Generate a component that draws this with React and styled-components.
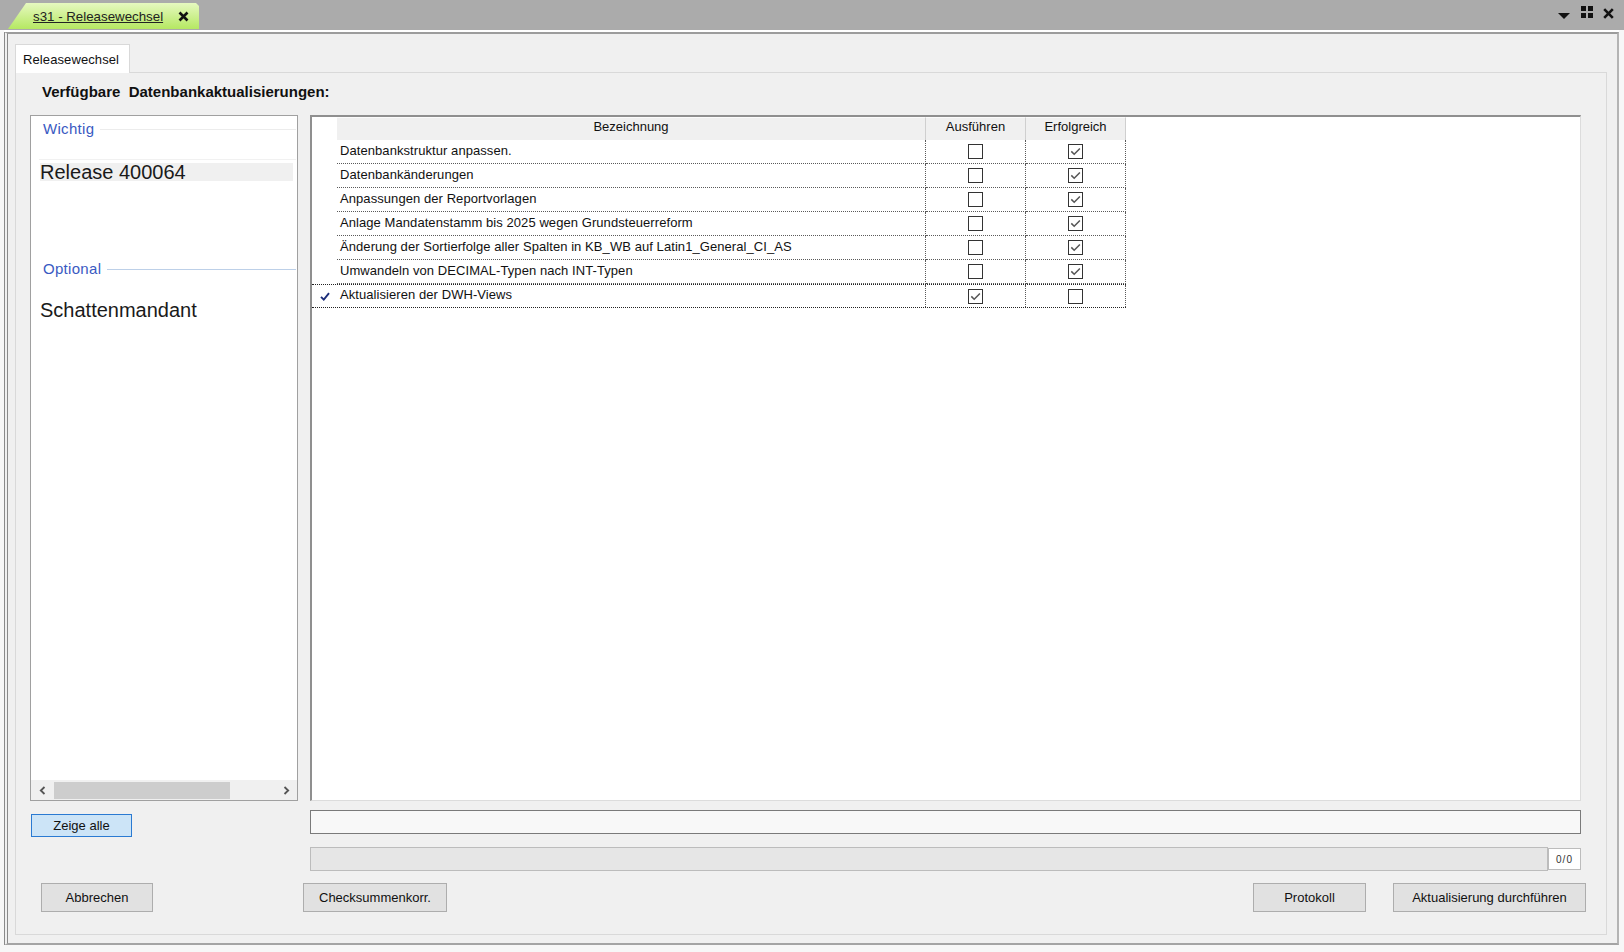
import React from "react";
import styled, { createGlobalStyle } from "styled-components";

const GlobalStyle = createGlobalStyle`
  html, body { margin: 0; padding: 0; }
  body { font-family: "Liberation Sans", Arial, sans-serif; color: #000; }
  * { box-sizing: border-box; }
`;

const FONT = `"Liberation Sans", Arial, sans-serif`;

const Root = styled.div`
  width: 1624px;
  height: 952px;
  display: flex;
  flex-direction: column;
  background: #f7f7f7;
  overflow: hidden;
  font-family: ${FONT};
`;

const TitleBar = styled.div`
  height: 30px;
  flex: none;
  background: #ababab;
  display: flex;
  align-items: flex-end;
  padding: 0 10px 1px 8px;
`;

const DocTab = styled.div`
  width: 191px;
  height: 26px;
  display: flex;
  align-items: center;
  padding-left: 25px;
  gap: 15px;
  background: linear-gradient(#e6f8c0, #b5e862);
  clip-path: polygon(0 100%, 18px 0, calc(100% - 3px) 0, 100% 3px, 100% 100%);
`;

const DocTabLabel = styled.span`
  font-size: 13.3px;
  color: #222;
  text-decoration: underline;
  white-space: nowrap;
`;

const CloseGlyph = styled.svg`
  width: 11px;
  height: 11px;
  flex: none;
`;

const TitleIcons = styled.div`
  margin-left: auto;
  align-self: flex-start;
  margin-top: 6px;
  display: flex;
  align-items: flex-start;
`;

const DropTriangle = styled.div`
  width: 0;
  height: 0;
  margin-top: 7px;
  border-left: 6px solid transparent;
  border-right: 6px solid transparent;
  border-top: 6px solid #111;
`;

const IconSvg = styled.svg`
  margin-left: ${(p) => p.$ml || 0}px;
  margin-top: ${(p) => p.$mt || 0}px;
  flex: none;
`;

const Frame = styled.div`
  flex: none;
  height: 913px;
  margin: 2px 5px 7px 4px;
  border-left: 4px double #8a8a8a;
  border-top: 2px solid #9c9c9c;
  border-right: 2px solid #b4b4b4;
  border-bottom: 2px solid #a4a4a4;
  box-shadow: 0 -2px 0 #fff;
  background: #f0f0f0;
  display: flex;
  flex-direction: column;
  padding: 10px 10px 8px 7px;
`;

const TabStrip = styled.div`
  display: flex;
  height: 28px;
  flex: none;
`;

const TabHeader = styled.div`
  width: 115px;
  height: 29px;
  background: #fff;
  border: 1px solid #d9d9d9;
  border-bottom: none;
  display: flex;
  align-items: center;
  padding-left: 7px;
  font-size: 13px;
  letter-spacing: 0.1px;
  color: #111;
  position: relative;
  z-index: 1;
`;

const TabPage = styled.div`
  flex: 1;
  border: 1px solid #d9d9d9;
  background: #f0f0f0;
  display: flex;
  flex-direction: column;
  padding: 10px 25px 22px 14px;
`;

const Heading = styled.div`
  height: 18px;
  line-height: 18px;
  font-size: 15px;
  font-weight: bold;
  padding-left: 12px;
  white-space: pre;
  color: #111;
`;

const MainRow = styled.div`
  margin-top: 14px;
  height: 686px;
  flex: none;
  display: flex;
  gap: 12px;
`;

/* ---------- left list view ---------- */
const ListPanel = styled.div`
  width: 268px;
  flex: none;
  background: #fff;
  border: 1px solid #a0a0a0;
  display: flex;
  flex-direction: column;
`;

const GroupHeader = styled.div`
  display: flex;
  align-items: center;
  gap: 6px;
  height: 16px;
  margin-top: ${(p) => p.$mt}px;
  padding: 0 1px 0 12px;
`;

const GroupTitle = styled.span`
  font-size: 15px;
  line-height: 16px;
  letter-spacing: 0.3px;
  color: #3a5ac2;
`;

const GroupLine = styled.div`
  flex: 1;
  height: 1px;
  background: ${(p) => p.$color};
`;

const ListSeparator = styled.div`
  height: 1px;
  margin: 22px 1px 0 8px;
  background: #f1f1f1;
`;

const ListItem = styled.div`
  height: 18px;
  line-height: 18px;
  margin: ${(p) => p.$mt}px 4px 0 9px;
  font-size: 20px;
  color: #1a1a1a;
  background: ${(p) => (p.$highlight ? "#f0f0f0" : "transparent")};
  white-space: nowrap;
`;

const HScroll = styled.div`
  margin-top: auto;
  height: 20px;
  background: #f0f0f0;
  display: flex;
  align-items: center;
`;

const ScrollArrow = styled.div`
  width: 22px;
  height: 20px;
  flex: none;
  display: flex;
  align-items: center;
  justify-content: center;
`;

const ScrollTrack = styled.div`
  flex: 1;
  height: 20px;
  display: flex;
  align-items: center;
  padding-left: 1px;
`;

const ScrollThumb = styled.div`
  width: 176px;
  height: 17px;
  background: #cdcdcd;
`;

/* ---------- data grid ---------- */
const COLS = "25px 589px 100px 100px";

const GridPanel = styled.div`
  flex: 1;
  background: #fff;
  border-top: 2px solid #8f8f8f;
  border-left: 2px solid #8f8f8f;
  border-right: 1px solid #dcdcdc;
  border-bottom: 1px solid #dcdcdc;
`;

const GridHeaderRow = styled.div`
  display: grid;
  grid-template-columns: ${COLS};
  width: 814px;
  height: 23px;
`;

const HeaderCell = styled.div`
  background: ${(p) => (p.$corner ? "#fff" : "#f0f0f0")};
  border-top: 1px solid ${(p) => (p.$corner ? "#fff" : "#fbfbfb")};
  border-right: 1px solid ${(p) => (p.$corner ? "#fff" : "#cfcfcf")};
  font-size: 13px;
  line-height: 17px;
  text-align: center;
  color: #111;
  white-space: nowrap;
`;

const GridRow = styled.div`
  display: grid;
  grid-template-columns: ${COLS};
  width: 814px;
  height: 24px;
  border-top: ${(p) => (p.$selected ? "1px dotted #222" : "none")};
  border-bottom: ${(p) => (p.$selected ? "1px dotted #222" : "none")};
`;

const RowHeaderCell = styled.div`
  display: flex;
  align-items: center;
  justify-content: flex-end;
  padding-right: 7px;
`;

const DataCell = styled.div`
  border-right: 1px dotted #5a5a5a;
  border-bottom: ${(p) => (p.$selected ? "none" : "1px dotted #5a5a5a")};
  font-size: 13px;
  letter-spacing: 0.07px;
  line-height: ${(p) => (p.$selected ? 20 : 21)}px;
  padding-left: 3px;
  color: #111;
  white-space: nowrap;
  overflow: hidden;
  display: ${(p) => (p.$center ? "flex" : "block")};
  align-items: center;
  justify-content: center;
  ${(p) => (p.$center ? "padding-left: 0;" : "")}
`;

const CheckBox = styled.div`
  width: 15px;
  height: 15px;
  border: 1px solid #333;
  background: #fff;
  display: flex;
  align-items: center;
  justify-content: center;
`;

/* ---------- status / buttons ---------- */
const StatusArea = styled.div`
  margin-top: 9px;
  display: grid;
  grid-template-columns: 268px 1fr;
  column-gap: 12px;
  flex: none;
`;

const LeftCol = styled.div`
  display: flex;
  flex-direction: column;
`;

const RightCol = styled.div`
  display: flex;
  flex-direction: column;
  gap: 13px;
`;

const TextBox = styled.div`
  height: 24px;
  border: 1px solid #7a7a7a;
  background: #f8f8f8;
`;

const ProgressRow = styled.div`
  height: 24px;
  display: flex;
  align-items: center;
`;

const ProgressBar = styled.div`
  flex: 1;
  height: 24px;
  background: #e6e6e6;
  border: 1px solid #bcbcbc;
`;

const Counter = styled.div`
  width: 33px;
  height: 22px;
  flex: none;
  background: #fff;
  border: 1px solid #bcbcbc;
  font-size: 10px;
  letter-spacing: 1px;
  color: #333;
  display: flex;
  align-items: center;
  justify-content: center;
`;

const Button = styled.button`
  height: ${(p) => p.$h || 29}px;
  width: ${(p) => p.$w}px;
  margin-left: ${(p) => (p.$ml === "auto" ? "auto" : `${p.$ml || 0}px`)};
  margin-top: ${(p) => p.$mt || 0}px;
  margin-right: ${(p) => p.$mr || 0}px;
  flex: none;
  padding: 0;
  font-family: ${FONT};
  font-size: 13px;
  color: #111;
  background: ${(p) => (p.$focused ? "#cce4f7" : "#e1e1e1")};
  border: 1px solid ${(p) => (p.$focused ? "#2a7ad2" : "#adadad")};
  cursor: default;
`;

const ButtonRow = styled.div`
  margin-top: 12px;
  height: 29px;
  flex: none;
  display: flex;
`;

const Check = ({ color = "#555" }) => (
  <svg width="13" height="13" viewBox="0 0 13 13">
    <polyline points="2.3,6.4 5.2,9.3 10.9,3.5" fill="none" stroke={color} strokeWidth="1.5" />
  </svg>
);

const rows = [
  { text: "Datenbankstruktur anpassen.", run: false, ok: true },
  { text: "Datenbankänderungen", run: false, ok: true },
  { text: "Anpassungen der Reportvorlagen", run: false, ok: true },
  { text: "Anlage Mandatenstamm bis 2025 wegen Grundsteuerreform", run: false, ok: true },
  { text: "Änderung der Sortierfolge aller Spalten in KB_WB auf Latin1_General_CI_AS", run: false, ok: true },
  { text: "Umwandeln von DECIMAL-Typen nach INT-Typen", run: false, ok: true },
  { text: "Aktualisieren der DWH-Views", run: true, ok: false, selected: true },
];

export default function App() {
  return (
    <Root>
      <GlobalStyle />
      <TitleBar>
        <DocTab>
          <DocTabLabel>s31 - Releasewechsel</DocTabLabel>
          <CloseGlyph viewBox="0 0 11 11">
            <path d="M1.5 1.5 L9.5 9.5 M9.5 1.5 L1.5 9.5" stroke="#111" strokeWidth="2.6" />
          </CloseGlyph>
        </DocTab>
        <TitleIcons>
          <DropTriangle />
          <IconSvg width="12" height="12" viewBox="0 0 12 12" $ml={11}>
            <rect x="0" y="0" width="5" height="5" fill="#111" />
            <rect x="7" y="0" width="5" height="5" fill="#111" />
            <rect x="0" y="7" width="5" height="5" fill="#111" />
            <rect x="7" y="7" width="5" height="5" fill="#111" />
          </IconSvg>
          <IconSvg width="11" height="11" viewBox="0 0 11 11" $ml={10} $mt={2}>
            <path d="M1.2 1.2 L9.8 9.8 M9.8 1.2 L1.2 9.8" stroke="#111" strokeWidth="2.6" />
          </IconSvg>
        </TitleIcons>
      </TitleBar>

      <Frame>
        <TabStrip>
          <TabHeader>Releasewechsel</TabHeader>
        </TabStrip>
        <TabPage>
          <Heading>{"Verfügbare  Datenbankaktualisierungen:"}</Heading>
          <MainRow>
            <ListPanel>
              <GroupHeader $mt={5}>
                <GroupTitle>Wichtig</GroupTitle>
                <GroupLine $color="#ececec" />
              </GroupHeader>
              <ListSeparator />
              <ListItem $mt={3} $highlight>Release 400064</ListItem>
              <GroupHeader $mt={80}>
                <GroupTitle>Optional</GroupTitle>
                <GroupLine $color="#bdd0e8" />
              </GroupHeader>
              <ListItem $mt={24}>Schattenmandant</ListItem>
              <HScroll>
                <ScrollArrow>
                  <svg width="7" height="9" viewBox="0 0 7 9">
                    <polyline points="5.5,1 1.8,4.5 5.5,8" fill="none" stroke="#555" strokeWidth="1.8" />
                  </svg>
                </ScrollArrow>
                <ScrollTrack>
                  <ScrollThumb />
                </ScrollTrack>
                <ScrollArrow>
                  <svg width="7" height="9" viewBox="0 0 7 9">
                    <polyline points="1.5,1 5.2,4.5 1.5,8" fill="none" stroke="#555" strokeWidth="1.8" />
                  </svg>
                </ScrollArrow>
              </HScroll>
            </ListPanel>

            <GridPanel>
              <GridHeaderRow>
                <HeaderCell $corner />
                <HeaderCell>Bezeichnung</HeaderCell>
                <HeaderCell>Ausführen</HeaderCell>
                <HeaderCell>Erfolgreich</HeaderCell>
              </GridHeaderRow>
              {rows.map((r) => (
                <GridRow key={r.text} $selected={r.selected}>
                  <RowHeaderCell>
                    {r.selected && (
                      <svg width="10" height="9" viewBox="0 0 10 9">
                        <polyline points="1,4.8 3.8,7.6 9,1.2" fill="none" stroke="#1c2d7a" strokeWidth="1.9" />
                      </svg>
                    )}
                  </RowHeaderCell>
                  <DataCell $selected={r.selected}>{r.text}</DataCell>
                  <DataCell $selected={r.selected} $center>
                    <CheckBox>{r.run && <Check />}</CheckBox>
                  </DataCell>
                  <DataCell $selected={r.selected} $center>
                    <CheckBox>{r.ok && <Check />}</CheckBox>
                  </DataCell>
                </GridRow>
              ))}
            </GridPanel>
          </MainRow>

          <StatusArea>
            <LeftCol>
              <Button $w={101} $h={23} $ml={1} $mt={4} $focused>
                Zeige alle
              </Button>
            </LeftCol>
            <RightCol>
              <TextBox />
              <ProgressRow>
                <ProgressBar />
                <Counter>0/0</Counter>
              </ProgressRow>
            </RightCol>
          </StatusArea>

          <ButtonRow>
            <Button $w={112} $ml={11}>Abbrechen</Button>
            <Button $w={144} $ml={150}>Checksummenkorr.</Button>
            <Button $w={113} $ml="auto">Protokoll</Button>
            <Button $w={193} $ml={27} $mr={-5}>Aktualisierung durchführen</Button>
          </ButtonRow>
        </TabPage>
      </Frame>
    </Root>
  );
}
